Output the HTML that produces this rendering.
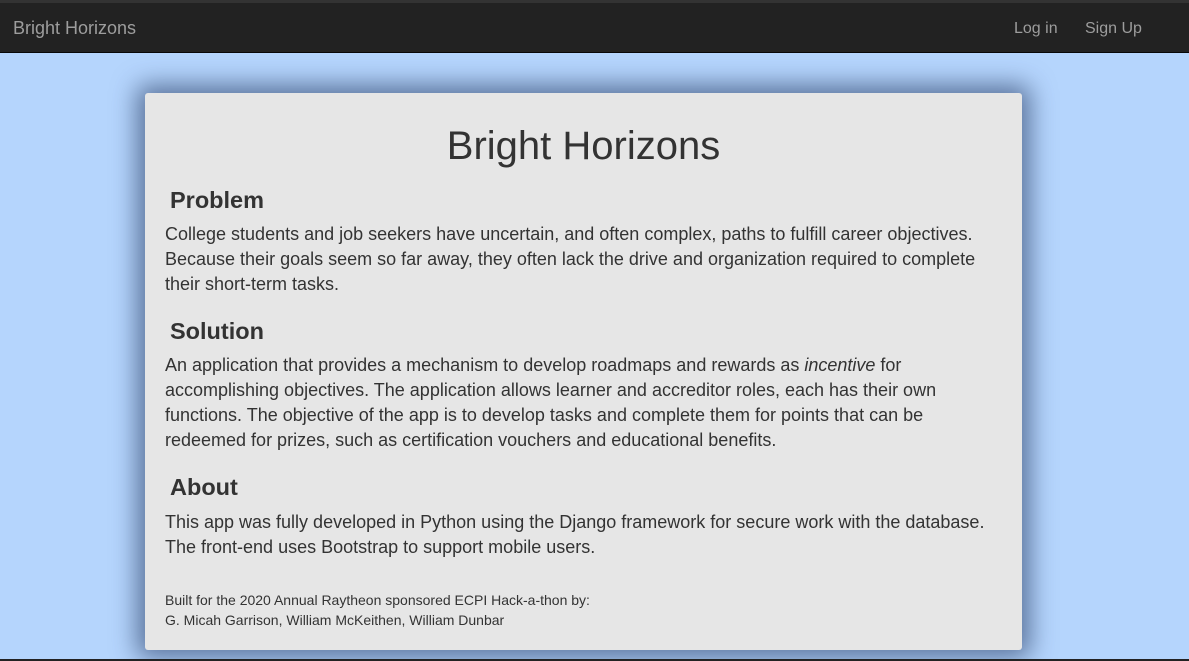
<!DOCTYPE html>
<html><head><style>
body{margin:0;width:1189px;height:661px;background:#b5d5fd;font-family:"Liberation Sans",sans-serif;overflow:hidden;position:relative}
.nav{position:absolute;top:0;left:0;width:1189px;height:53px;background:#222;border-top:3px solid #333;box-sizing:border-box;border-bottom:1px solid #080808}
.nav span{position:absolute;top:17px;color:#9d9d9d;font-size:16px}
.card{position:absolute;left:145px;top:93px;width:877px;height:557px;background:#e6e6e6;border-radius:3px;box-shadow:0 0 25px 8px rgba(30,50,90,.6);color:#333}
h1{margin:0;position:absolute;top:31px;width:100%;text-align:center;font-weight:400;font-size:40px}
h3{position:absolute;left:25px;margin:0;font-size:23.5px;font-weight:bold}
p{position:absolute;left:20px;margin:0;font-size:18px;line-height:25px;width:840px}
.f{font-size:14px;line-height:20px}
.bot{position:absolute;left:0;top:659px;width:1189px;height:2px;background:#222}
</style></head><body>
<div class="nav"><span style="left:13px;font-size:18px;top:15px">Bright Horizons</span><span style="left:1014px">Log in</span><span style="left:1085px">Sign Up</span></div>
<div class="card">
<h1>Bright Horizons</h1>
<h3 style="top:94px">Problem</h3>
<p style="top:129px">College students and job seekers have uncertain, and often complex, paths to fulfill career objectives. Because their goals seem so far away, they often lack the drive and organization required to complete their short-term tasks.</p>
<h3 style="top:225px">Solution</h3>
<p style="top:260px">An application that provides a mechanism to develop roadmaps and rewards as <i>incentive</i> for accomplishing objectives. The application allows learner and accreditor roles, each has their own functions. The objective of the app is to develop tasks and complete them for points that can be redeemed for prizes, such as certification vouchers and educational benefits.</p>
<h3 style="top:381px">About</h3>
<p style="top:417px">This app was fully developed in Python using the Django framework for secure work with the database. The front-end uses Bootstrap to support mobile users.</p>
<p class="f" style="top:497px">Built for the 2020 Annual Raytheon sponsored ECPI Hack-a-thon by:<br>G. Micah Garrison, William McKeithen, William Dunbar</p>
</div>
<div class="bot"></div>
</body></html>
